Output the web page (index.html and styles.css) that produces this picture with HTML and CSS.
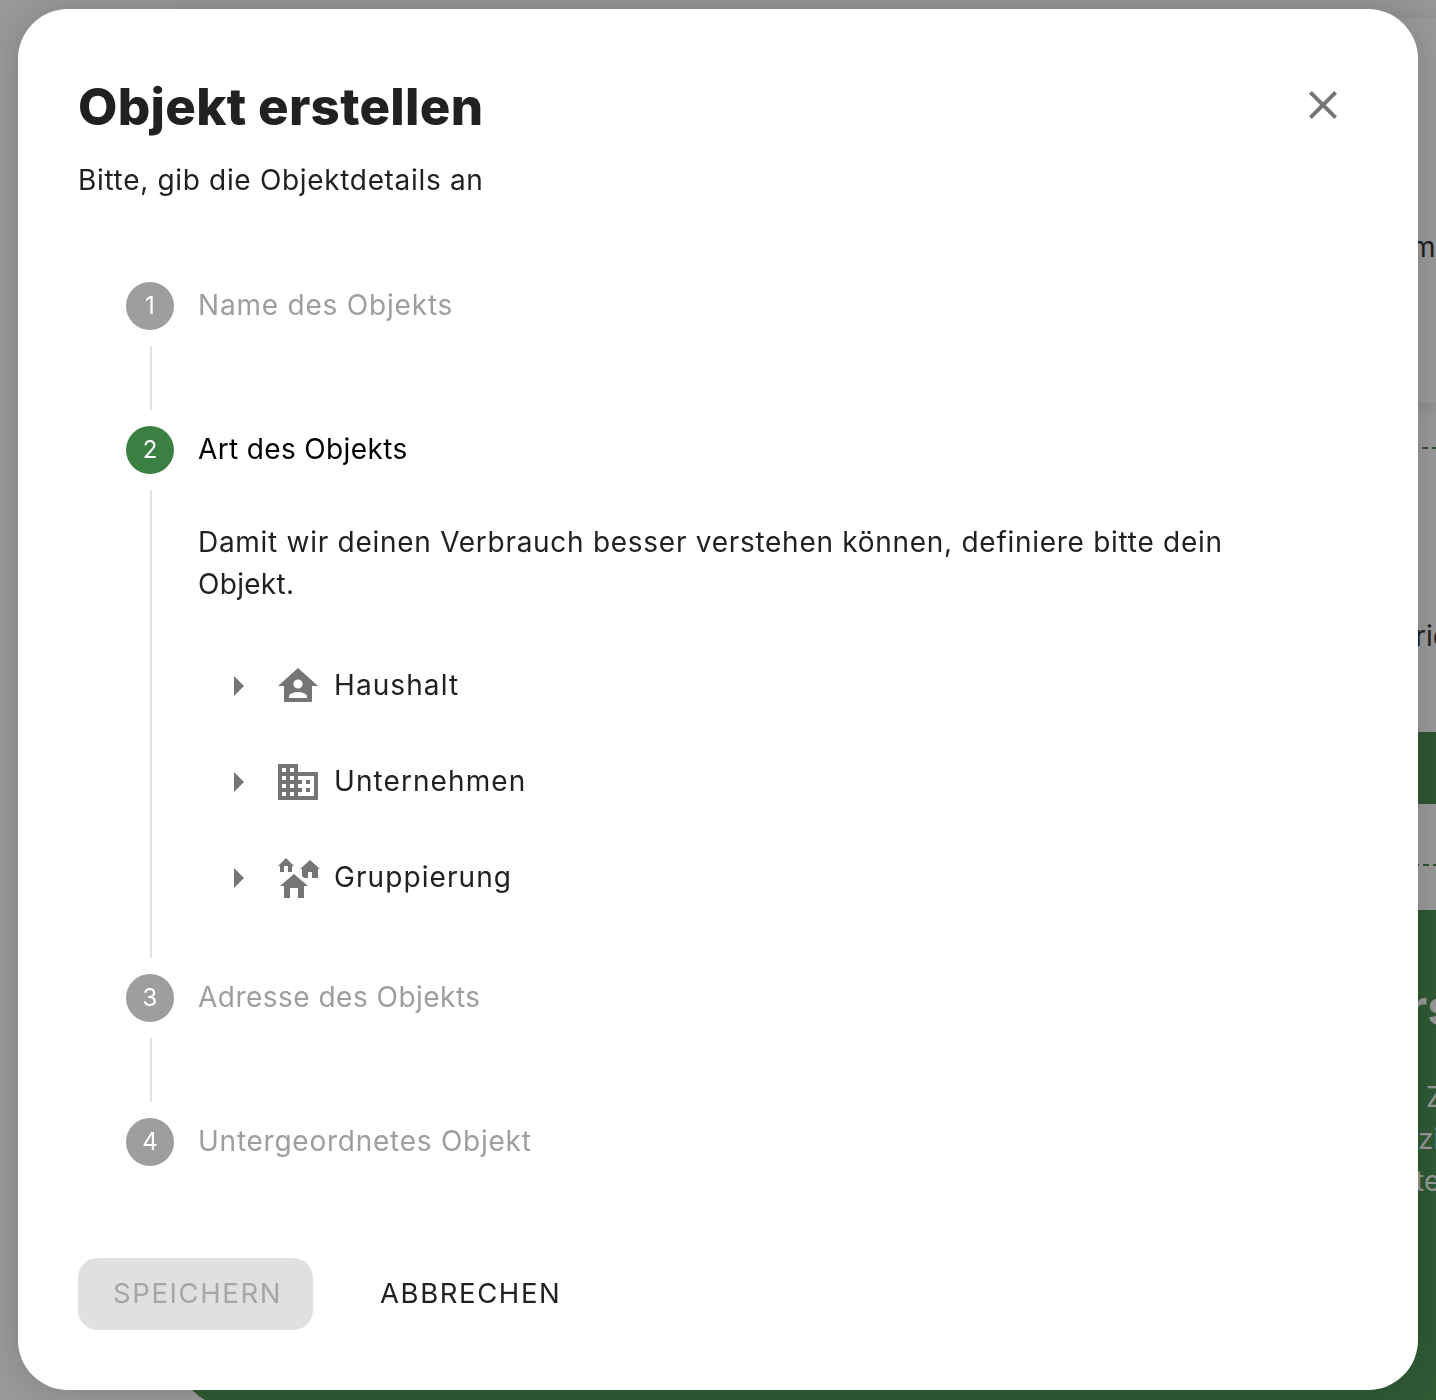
FILE: index.html
```html
<!DOCTYPE html>
<html lang="de">
<head>
<meta charset="utf-8">
<title>Objekt erstellen</title>
<link rel="stylesheet" href="styles.css">
</head>
<body>
<div class="page">
  <div class="page-bar"></div>
  <div class="page-card"><span>m</span></div>
  <div class="page-section">
    <div class="dash dash-first"></div>
    <div class="page-note">rie</div>
    <div class="page-button"></div>
    <div class="dash dash-second"></div>
  </div>
  <div class="promo">
    <div class="promo-title">rs</div>
    <div class="promo-line promo-z">Z</div>
    <div class="promo-line">zi</div>
    <div class="promo-line promo-te">te</div>
  </div>
</div>
<div class="dialog" role="dialog">
  <header class="head">
    <div>
      <h1 class="title">Objekt erstellen</h1>
      <p class="subtitle">Bitte, gib die Objektdetails an</p>
    </div>
    <svg class="close" viewBox="0 0 24 24"><path d="M19 6.41 17.59 5 12 10.59 6.41 5 5 6.41 10.59 12 5 17.59 6.41 19 12 13.41 17.59 19 19 17.59 13.41 12z"/></svg>
  </header>
  <div class="stepper">
    <div class="step"><span class="dot">1</span><span class="label name">Name des Objekts</span></div>
    <div class="rail"></div>
    <div class="step active"><span class="dot">2</span><span class="label kind-label">Art des Objekts</span></div>
    <div class="rail rail-open">
      <p class="hint">Damit wir deinen Verbrauch besser verstehen können, definiere bitte dein <span class="hint-end">Objekt.</span></p>
      <div class="tree">
        <div class="row">
          <svg class="icon" viewBox="0 0 24 24"><path d="M10 17l5-5-5-5v10z"/></svg>
          <svg class="icon kind" viewBox="0 0 24 24"><path fill-rule="evenodd" d="M12 3 2 12h3v8h14v-8h3zM12 8.7a2.3 2.3 0 1 1 0 4.6a2.3 2.3 0 0 1 0-4.6zM7.5 18v-.7c0-1.5 2.6-2.3 4.5-2.3s4.500.8 4.5 2.3v.7z"/></svg>
          <span>Haushalt</span>
        </div>
        <div class="row">
          <svg class="icon" viewBox="0 0 24 24"><path d="M10 17l5-5-5-5v10z"/></svg>
          <svg class="icon kind" viewBox="0 0 24 24"><path d="M12 7V3H2v18h20V7H12zM6 19H4v-2h2v2zm0-4H4v-2h2v2zm0-4H4V9h2v2zm0-4H4V5h2v2zm4 12H8v-2h2v2zm0-4H8v-2h2v2zm0-4H8V9h2v2zm0-4H8V5h2v2zm10 12h-8v-2h2v-2h-2v-2h2v-2h-2V9h8v10zm-2-8h-2v2h2v-2zm0 4h-2v2h2v-2z"/></svg>
          <span>Unternehmen</span>
        </div>
        <div class="row">
          <svg class="icon" viewBox="0 0 24 24"><path d="M10 17l5-5-5-5v10z"/></svg>
          <svg class="icon kind" viewBox="0 0 48 48"><path d="M12 4 20 12H18V18H14V12H10V18H6V12H4zM36 6 46 15H44V24H38V18H34V24H30L28 22V15H26zM20 20 34 32H30V44H24V34H16V44H10V32H6z"/></svg>
          <span>Gruppierung</span>
        </div>
      </div>
    </div>
    <div class="step"><span class="dot">3</span><span class="label address">Adresse des Objekts</span></div>
    <div class="rail"></div>
    <div class="step"><span class="dot">4</span><span class="label">Untergeordnetes Objekt</span></div>
  </div>
  <div class="actions">
    <button class="btn save" disabled>SPEICHERN</button>
    <button class="btn cancel">ABBRECHEN</button>
  </div>
</div>
</body>
</html>
```
FILE: styles.css
```css
* { box-sizing: border-box; }
body {
  margin: 0;
  background: #9a9a9a;
  color: #212121;
  font: 390 28px/42px Inter, "Noto Sans", sans-serif;
}
h1, p { margin: 0; }

.page { height: 1400px; overflow: hidden; white-space: nowrap; }
.page-bar { height: 18px; margin-left: 175px; background: #979797; }
.page-card { height: 385px; margin-left: 175px; padding: 208px 0 0 1236px; background: #9a9a9a; box-shadow: 0 4px 16px rgba(0,0,0,.12); }
.page-section { height: 507px; margin-left: 175px; padding-top: 44px; }
.dash { height: 2px; background: repeating-linear-gradient(90deg, #2d5231 0 6px, transparent 6px 10px); }
.dash-first { margin-left: 1247px; }
.dash-second { margin: 60px 0 0 1238px; }
.page-note { padding: 166px 0 0 1240px; height: 283px; }
.page-button { height: 72px; background: #2f5633; }
.promo { height: 498px; margin-left: 175px; padding: 59px 0 0 1243px; border-radius: 0 0 0 60px; background: #2f5a34; color: #999; overflow: hidden; }
.promo-title { font-size: 50px; font-weight: 700; line-height: 76px; margin-left: -11px; }
.promo-line { height: 42px; }
.promo-z { margin: 31px 0 0 8px; }
.promo-te { margin-left: -3px; }

.dialog {
  position: fixed;
  left: 18px;
  top: 9px;
  width: 1400px;
  height: 1381px;
  padding: 60px;
  border-radius: 50px;
  background: #fff;
  box-shadow: 0 0 40px rgba(0,0,0,.17);
}
.head { display: flex; justify-content: space-between; }
.title { padding-top: 1px; font-size: 51px; font-weight: 800; line-height: 74px; letter-spacing: .3px; }
.subtitle { margin-top: 15px; letter-spacing: .67px; }
.close { width: 48px; height: 48px; margin: 12px 11px 0 0; fill: #757575; }

.stepper { padding: 81px 48px 0; }
.step { display: flex; align-items: center; gap: 24px; height: 48px; color: #9e9e9e; }
.dot { width: 48px; height: 48px; border-radius: 50%; background: #9e9e9e; color: #fff; font-size: 24px; line-height: 48px; text-align: center; }
.label { padding-bottom: 2px; letter-spacing: .75px; }
.name { letter-spacing: .8px; }
.kind-label { letter-spacing: .36px; }
.address { letter-spacing: .48px; }
.active { color: #000; }
.active .dot { background: #3a8043; }
.rail { height: 64px; margin: 16px 0 16px 24px; border-left: 2px solid #e0e0e0; }
.rail-open { height: 468px; padding: 31px 0 0 46px; }
.hint { letter-spacing: .72px; }
.hint-end { letter-spacing: .3px; }
.tree { display: flex; flex-direction: column; gap: 48px; padding: 57px 0 0 16px; }
.row { display: flex; align-items: center; height: 48px; letter-spacing: 1.08px; }
.row span { padding-bottom: 2px; }
.icon { width: 48px; height: 48px; fill: #757575; }
.kind { margin: 0 12px; }

.actions { display: flex; gap: 32px; margin-top: 92px; }
.btn { height: 72px; padding: 0 34px 3px 35px; border: 0; border-radius: 20px; background: none; color: #212121; font: inherit; font-size: 27.5px; letter-spacing: 1.6px; }
.save { width: 235px; background: #e0e0e0; color: #a6a6a6; }
```
